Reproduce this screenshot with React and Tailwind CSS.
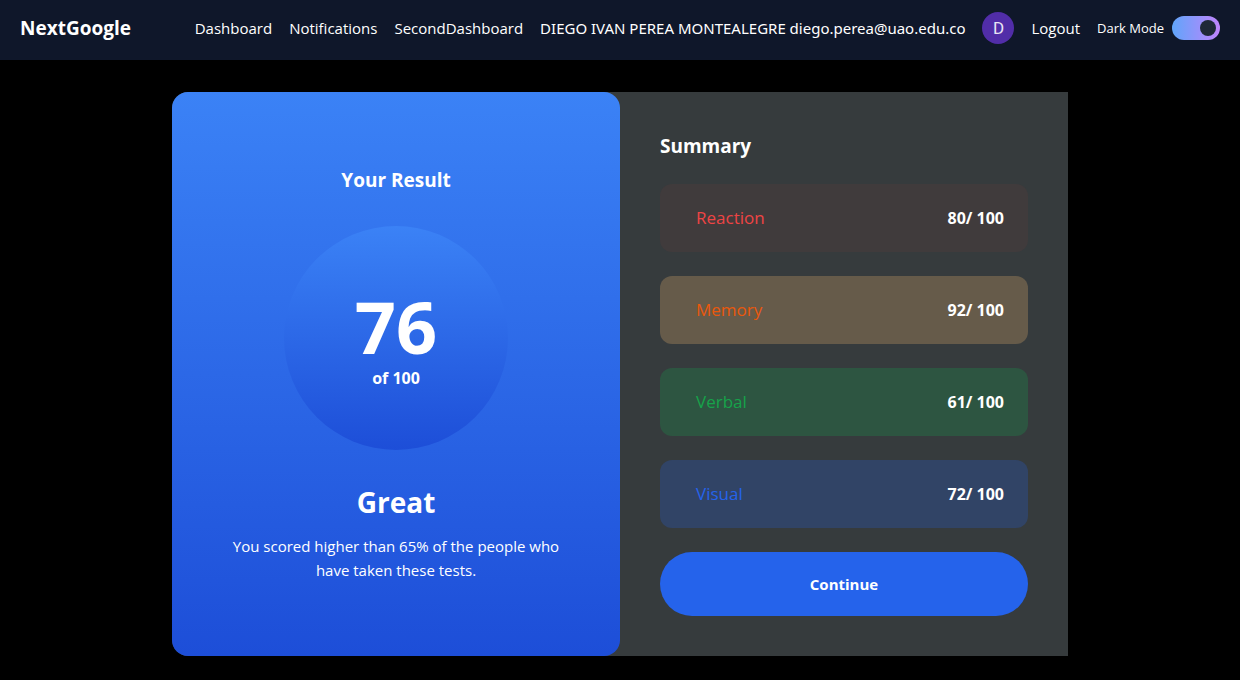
import { useState } from "react";

const scores = [
  { name: "Reaction", value: 80, row: "bg-[#403b3c]", label: "text-[#ef4444]" },
  { name: "Memory", value: 92, row: "bg-[#665b4a]", label: "text-[#ea580c]" },
  { name: "Verbal", value: 61, row: "bg-[#2d5541]", label: "text-[#16a34a]" },
  { name: "Visual", value: 72, row: "bg-[#314466]", label: "text-[#2563eb]" },
];

function NavBar() {
  const [dark, setDark] = useState(true);
  return (
    <nav className="flex items-center justify-between bg-[#0f172a] px-5 pt-3 pb-4">
      <a href="#home" className="text-[19px] leading-7 font-bold">NextGoogle</a>
      <div className="flex items-center gap-[17px] whitespace-nowrap">
        <a href="#dashboard">Dashboard</a>
        <a href="#notifications">Notifications</a>
        <a href="#second-dashboard">SecondDashboard</a>
        <span className="font-['Noto_Sans','Open_Sans',sans-serif]">
          DIEGO IVAN PEREA MONTEALEGRE diego.perea@uao.edu.co
        </span>
        <span className="flex size-8 items-center justify-center rounded-full bg-[#512da8] font-[Roboto] text-[17px] text-[#e9e4f4]">
          D
        </span>
        <button type="button">Logout</button>
        <label className="flex cursor-pointer items-center gap-2 text-[13px]">
          Dark Mode
          <input
            type="checkbox"
            checked={dark}
            onChange={(e) => setDark(e.target.checked)}
            className="peer sr-only"
          />
          <span className="flex h-6 w-12 items-center rounded-full bg-linear-to-r/srgb from-[#60a5fa] to-[#c084fc] p-1 peer-checked:justify-end">
            <span className="size-4 rounded-full bg-[#1f2937]" />
          </span>
        </label>
      </div>
    </nav>
  );
}

function Result() {
  return (
    <section className="flex flex-col items-center justify-center rounded-2xl bg-linear-to-b/srgb from-[#3b82f6] to-[#1d4ed8] px-12 py-10 text-center">
      <h2 className="text-[19px] leading-7 font-bold">Your Result</h2>
      <div className="mt-8 flex size-56 flex-col items-center justify-center gap-1 rounded-full bg-linear-to-b/srgb from-[#3b82f6] to-[#1d4ed8] pt-1">
        <p className="text-7xl leading-none font-bold">76</p>
        <p className="text-base font-bold">of 100</p>
      </div>
      <p className="mt-8 text-[28px] leading-10 font-bold">Great</p>
      <p className="mt-3">You scored higher than 65% of the people who have taken these tests.</p>
    </section>
  );
}

function Summary() {
  return (
    <section className="flex flex-col gap-6 p-10">
      <h2 className="text-[19px] leading-7 font-bold">Summary</h2>
      {scores.map((s) => (
        <div key={s.name} className={`flex h-17 items-center justify-between rounded-xl pr-6 pl-9 ${s.row}`}>
          <span className={`text-[17px] ${s.label}`}>{s.name}</span>
          <span className="text-base font-bold">{s.value}/ 100</span>
        </div>
      ))}
      <button type="button" className="h-16 rounded-4xl bg-[#2563eb] font-bold">
        Continue
      </button>
    </section>
  );
}

export default function App() {
  return (
    <div className="min-h-screen bg-black font-['Open_Sans','Noto_Sans',sans-serif] text-[15px] leading-6 text-white">
      <NavBar />
      <main className="px-6 pt-8 pb-6">
        <div className="mx-auto grid max-w-4xl grid-cols-1 rounded-l-2xl bg-[#363b3d] md:grid-cols-2">
          <Result />
          <Summary />
        </div>
      </main>
    </div>
  );
}
